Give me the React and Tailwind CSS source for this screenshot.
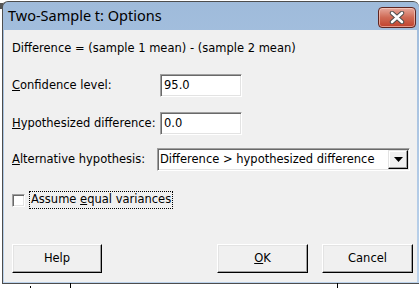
import React from 'react'

const body = { fontFamily: '"DejaVu Sans", Tahoma, sans-serif' }

function Sunken({ className = '', children }) {
  return (
    <div
      className={`bg-white border border-t-[#a0a0a0] border-l-[#a0a0a0] border-r-white border-b-white shadow-[inset_1px_1px_0_#696969,inset_-1px_-1px_0_#e3e3e3] ${className}`}
    >
      {children}
    </div>
  )
}

function Btn({ children, className = '' }) {
  return (
    <button
      className={`h-[29px] bg-[#f0f0f0] border border-t-white border-l-white border-r-black border-b-black shadow-[inset_-1px_-1px_0_#a0a0a0,inset_1px_1px_0_#e3e3e3] text-[11.5px] text-black ${className}`}
      style={body}
    >
      {children}
    </button>
  )
}

function Row({ label, children }) {
  return (
    <div className="flex items-center h-[23px]">
      <div className="w-[148px] shrink-0 text-[11.5px]">{label}</div>
      {children}
    </div>
  )
}

export default function App() {
  return (
    <div className="relative w-[419px] h-[288px] bg-white overflow-hidden">
      {/* background app behind the dialog */}
      <div className="absolute left-[0px] top-[3px] w-[3px] h-[6px] bg-[#555]" />
      <div className="absolute left-[70px] top-[283px] w-px h-[5px] bg-black" />
      <div className="absolute left-[30px] top-[286px] w-px h-[2px] bg-black" />
      <div className="absolute left-[337px] top-[283px] w-px h-[5px] bg-black" />

      <div className="ml-[2px] mt-[1px] w-[417px] h-[283px] border border-[#4d4d4d] border-r-0 rounded-tl-[6px] rounded-tr-[6px] bg-gradient-to-b from-[#9fbbdb] to-[#bcd3ec] flex flex-col">
        {/* title bar */}
        <div className="h-[28px] shrink-0 flex items-center pl-[5px] pr-[3px]">
          <span
            className="text-[14.5px] text-black"
            style={{ fontFamily: '"Noto Sans", "Open Sans", sans-serif' }}
          >
            Two-Sample t: Options
          </span>
          <div className="ml-auto mt-[2px] w-[38px] h-[21px] rounded-[4px] border border-[#5e2521] bg-gradient-to-b from-[#e6a89c] via-[#cf6a55] to-[#c0402c] shadow-[inset_0_0_0_1px_rgba(255,220,210,0.55)] flex items-center justify-center">
            <svg width="16" height="13" viewBox="0 0 16 13">
              <path
                d="M3 2 L13 11 M13 2 L3 11"
                stroke="#4a4a4a"
                strokeWidth="4.4"
                strokeLinecap="round"
              />
              <path
                d="M3 2 L13 11 M13 2 L3 11"
                stroke="#ffffff"
                strokeWidth="2.6"
                strokeLinecap="round"
              />
            </svg>
          </div>
        </div>

        {/* client area */}
        <div className="flex-1 ml-[1px] mr-[2px] mb-[1px] bg-[#f0f0f0] pl-[8px] text-black" style={body}>
          <div className="mt-[11px] h-[14px] leading-[14px] text-[11.5px]">
            Difference = (sample 1 mean) - (sample 2 mean)
          </div>

          <div className="mt-[19px]">
            <Row label={<><u>C</u>onfidence level:</>}>
              <Sunken className="w-[82px] h-[23px] flex items-center pl-[3px] text-[11.5px]">95.0</Sunken>
            </Row>
          </div>

          <div className="mt-[15px]">
            <Row label={<><u>H</u>ypothesized difference:</>}>
              <Sunken className="w-[82px] h-[23px] flex items-center pl-[3px] text-[11.5px]">0.0</Sunken>
            </Row>
          </div>

          <div className="mt-[13px]">
            <Row label={<><u>A</u>lternative hypothesis:</>}>
              <Sunken className="-ml-[3px] w-[253px] h-[23px] flex items-center pl-[2px] text-[11.5px]">
                <span>Difference &gt; hypothesized difference</span>
                <div className="ml-auto mr-[1px] w-[20px] h-[19px] bg-[#f0f0f0] border border-t-[#e3e3e3] border-l-[#e3e3e3] border-r-black border-b-black shadow-[inset_-1px_-1px_0_#a0a0a0,inset_1px_1px_0_#fff] flex items-center justify-center">
                  <svg width="9" height="5" viewBox="0 0 9 5">
                    <path d="M0 0 H9 L4.5 5 Z" fill="#000" />
                  </svg>
                </div>
              </Sunken>
            </Row>
          </div>

          <div className="mt-[20px] flex items-center h-[18px]">
            <Sunken className="w-[13px] h-[13px]" />
            <div className="ml-[4px] h-[18px] px-[1px] border border-dotted border-black flex items-center text-[11.5px] whitespace-pre">
              Assume <u>e</u>qual variances
            </div>
          </div>

          <div className="mt-[35px] flex items-center pr-[4px]">
            <Btn className="w-[90px]">Help</Btn>
            <Btn className="w-[91px] ml-auto">
              <u>O</u>K
            </Btn>
            <Btn className="w-[91px] ml-[14px]">Cancel</Btn>
          </div>
        </div>
      </div>
    </div>
  )
}
